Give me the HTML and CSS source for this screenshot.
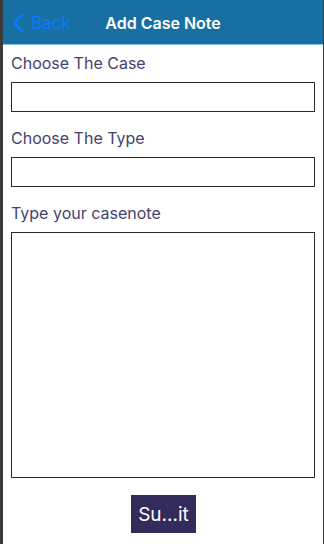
FILE: index.html
```html
<!DOCTYPE html>
<html lang="en">
<head>
    <meta charset="UTF-8">
    <meta name="viewport" content="width=device-width, initial-scale=1.0">
    <title>Add Case Note</title>
    <link rel="stylesheet" href="styles.css">
</head>
<body>
    <div class="app">
        <header class="nav-bar">
            <a class="back" href="#">
                <svg class="chevron" width="12" height="20" viewBox="0 0 12 20">
                    <path d="M10 2 L2 10 L10 18" fill="none" stroke="#0a7aff" stroke-width="2.6" stroke-linecap="round" stroke-linejoin="round"/>
                </svg>
                <span>Back</span>
            </a>
            <h1 class="title">Add Case Note</h1>
        </header>

        <form class="form">
            <label class="field-label">Choose The Case</label>
            <input class="field" type="text">

            <label class="field-label">Choose The Type</label>
            <input class="field" type="text">

            <label class="field-label">Type your casenote</label>
            <textarea class="note"></textarea>

            <div class="actions">
                <button class="submit" type="button">Su...it</button>
            </div>
        </form>
    </div>
</body>
</html>
```

FILE: styles.css
```css
html, body {
    margin: 0;
    height: 100%;
}
body {
    font-family: Inter, "Liberation Sans", sans-serif;
    background-color: #3b3b3b;
}
.app {
    margin: 0 1px 0 3px;
    height: 544px;
    background: white;
}
.nav-bar {
    height: 45px;
    padding-top: 2px;
    background-color: #186fa1;
    border-bottom: 1px solid #8ec3e6;
    box-sizing: border-box;
    display: flex;
    align-items: center;
    position: relative;
}
.back {
    display: flex;
    align-items: center;
    gap: 7px;
    padding-left: 9px;
    color: #0a7aff;
    text-decoration: none;
    font-size: 17px;
}
.title {
    position: absolute;
    left: 0;
    right: 0;
    margin: 0;
    text-align: center;
    color: white;
    font-size: 16px;
    font-weight: 600;
    pointer-events: none;
}
.form {
    display: flex;
    flex-direction: column;
    padding: 8px 8px 0 8px;
}
.field-label {
    color: #45426e;
    font-size: 16px;
    line-height: 21px;
}
.field {
    height: 30px;
    margin: 8px 0 16px;
    border: 1px solid #2a2a2a;
    box-sizing: border-box;
    padding: 0 6px;
    font: inherit;
}
.note {
    height: 246px;
    margin: 8px 0 17px;
    border: 1px solid #2a2a2a;
    box-sizing: border-box;
    resize: none;
    font: inherit;
}
.actions {
    display: flex;
    justify-content: center;
}
.submit {
    background-color: #322b5c;
    color: white;
    border: none;
    font-family: inherit;
    font-size: 19px;
    padding: 0 7px;
    height: 38px;
    margin-left: 1px;
}
```
